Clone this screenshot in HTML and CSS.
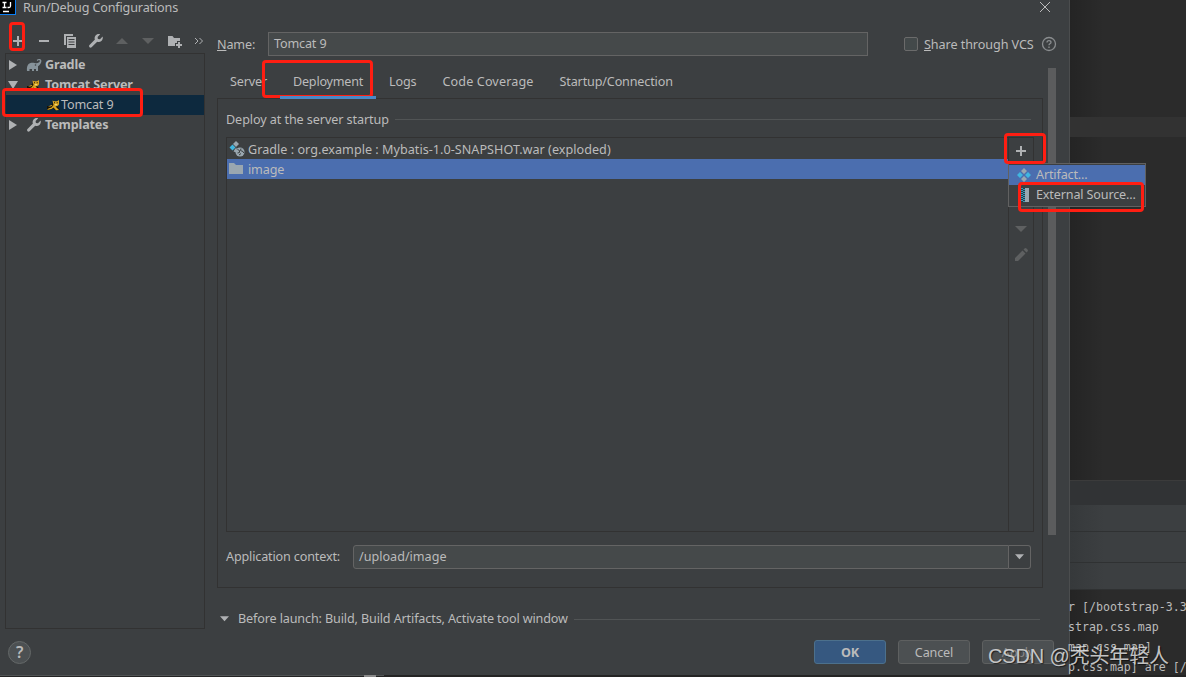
FILE: index.html
```html
<!DOCTYPE html>
<html lang="en">
<head>
    <meta charset="UTF-8">
    <meta name="viewport" content="width=device-width, initial-scale=1.0">
    <title>Run/Debug Configurations</title>
    <link rel="stylesheet" href="styles.css">
</head>
<body>
    <!-- shared icons -->
    <svg class="defs">
        <symbol id="wrench" viewBox="0 0 16 16">
            <path d="M14.6 3.6 12 6.2 9.9 5.9 9.6 3.9 12.2 1.3C10.400 .7 8.500 1.200 7.400 2.700 6.500 4 6.400 5.300 6.900 6.500L1.500 12.100C.9 12.700.9 13.600 1.500 14.200 2.100 14.800 3 14.800 3.600 14.200L9.200 8.700C10.600 9.300 12.200 9.100 13.400 8 14.700 6.800 15.100 5.100 14.600 3.600Z"/>
        </symbol>
        <symbol id="tomcat" viewBox="0 0 16 14">
            <path fill="#17130a" d="M1 8h3l3-3 5 4 2 3H9l-2-2-3 2H1Z"/>
            <path fill="#d9a520" d="M6.500 2.500 8 3.200h3L13 2v4.500L11.500 8 9.500 8.500l2 2 1.500 1.500-3 .3L7.500 9.500 5.500 11 1 12 2.500 10.500l3-1L7.500 7ZM2 8.500 5.500 7 6.500 7.500 4.500 8.500Z"/>
            <path fill="#f0d878" d="M8.500 6h3l-1 1.500h-1Z"/>
            <path fill="#17130a" d="M8 4.300h1v1H8ZM10.700 4.300h1v1h-1Z"/>
        </symbol>
        <symbol id="artifact" viewBox="0 0 16 16">
            <path fill="#9aa7b0" d="m8 1 3 3-3 3-3-3ZM8 9l3 3-3 3-3-3Z"/>
            <path fill="#40b6e0" d="m4 5 3 3-3 3-3-3ZM12 5l3 3-3 3-3-3Z"/>
        </symbol>
    </svg>

    <div class="desktop">
        <div class="dialog">
            <div class="title-bar">
                <svg class="app-icon" width="16" height="16" viewBox="0 0 16 16">
                    <rect width="16" height="15" fill="#0b7ff5"/>
                    <rect width="15" height="14" fill="#000"/>
                    <path d="M2.500 2.500h4M4.500 2.500v5M2.500 7.500h4M10.500 2v4q0 1.500-1.500 1.500H7.500M3 11.500h6" fill="none" stroke="#fff" stroke-width="1.300"/>
                </svg>
                <span class="title">Run/Debug Configurations</span>
                <svg class="close" width="12" height="12" viewBox="0 0 12 12"><path d="m1 1 10 10M11 1 1 11"/></svg>
            </div>

            <div class="content">
                <div class="sidebar">
                    <div class="toolbar">
                        <svg width="16" height="16" viewBox="0 0 16 16"><path d="M7 3h2v4h4v2H9v4H7V9H3V7h4Z"/></svg>
                        <svg width="16" height="16" viewBox="0 0 16 16"><path d="M3 7h10v2H3Z"/></svg>
                        <svg width="16" height="16" viewBox="0 0 16 16"><path fill-rule="evenodd" d="M2 1h9v2H4v9H2ZM5 4h9v11H5ZM6.500 6v1h6V6ZM6.500 8.500v1h6v-1ZM6.500 11v1h6v-1Z"/></svg>
                        <svg width="16" height="16"><use href="#wrench"/></svg>
                        <svg class="off" width="16" height="16" viewBox="0 0 16 16"><path d="M2 11h12L8 5Z"/></svg>
                        <svg class="off" width="16" height="16" viewBox="0 0 16 16"><path d="M2 5h12l-6 6Z"/></svg>
                        <svg width="16" height="16" viewBox="0 0 16 16"><path d="M2 3h4.500L8 5h6v3h-3v2H9v3H2ZM12 9h2v2h2v2h-2v2h-2v-2h-2v-2h2Z"/></svg>
                        <svg class="more" width="10" height="10" viewBox="0 0 10 10"><path d="m1 2 3 3-3 3M5.500 2l3 3-3 3"/></svg>
                    </div>
                    <div class="tree">
                        <div class="node">
                            <svg class="arrow" width="10" height="10" viewBox="0 0 10 10"><path d="M1 0v10l8-5Z"/></svg>
                            <svg class="icon" width="16" height="16" viewBox="0 0 16 16"><path fill="#87939a" d="M1 14c-.3-4 .3-7 3.500-8 2-.7 4.500.2 6 .2C12 6.200 13.800 5.300 13.800 4c0-.8-.8-1.200-1.500-.6l-.8.6-.8-1C12 1.600 15.300 1.500 15.400 4c0 2.600-2.200 4.500-3.400 5.300V14h-2v-2H8v2H6v-2H3.500v2Z"/><circle cx="9.500" cy="8" r=".8" fill="#3c3f41"/></svg>
                            <b>Gradle</b>
                        </div>
                        <div class="node">
                            <svg class="arrow" width="10" height="10" viewBox="0 0 10 10"><path d="M0 1h10L5 9Z"/></svg>
                            <svg class="icon" width="16" height="14"><use href="#tomcat"/></svg>
                            <b>Tomcat Server</b>
                        </div>
                        <div class="node child selected">
                            <svg class="icon" width="16" height="14"><use href="#tomcat"/></svg>
                            <span>Tomcat 9</span>
                        </div>
                        <div class="node">
                            <svg class="arrow" width="10" height="10" viewBox="0 0 10 10"><path d="M1 0v10l8-5Z"/></svg>
                            <svg class="icon" width="16" height="16"><use href="#wrench"/></svg>
                            <b>Templates</b>
                        </div>
                    </div>
                </div>

                <div class="editor">
                    <div class="name-row">
                        <label class="name-label"><u>N</u>ame:</label>
                        <div class="field name-field">Tomcat 9</div>
                        <span class="checkbox"></span>
                        <label class="share"><u>S</u>hare through VCS</label>
                        <svg class="hint" width="16" height="16" viewBox="0 0 16 16"><circle cx="8" cy="8" r="6.500"/><path d="M6 6.500Q6 4.600 8 4.600T10 6.300Q10 7.200 8.900 7.800 8 8.300 8 9.300M8 10.500v1.400"/></svg>
                    </div>

                    <div class="scroll-area">
                        <div class="main">
                            <div class="tabs">
                                <div class="tab">Server</div>
                                <div class="tab active">Deployment</div>
                                <div class="tab">Logs</div>
                                <div class="tab wide">Code Coverage</div>
                                <div class="tab">Startup/Connection</div>
                            </div>
                            <div class="panel">
                                <div class="group-title"><span>Deploy at the server startup</span><i class="rule"></i></div>
                                <div class="deploy">
                                    <div class="list">
                                        <div class="item">
                                            <svg width="16" height="16" viewBox="0 0 16 16"><path fill="#9aa7b0" d="m7 0 3 3-3 3-3-3Z"/><path fill="#40b6e0" d="m3.500 3.500 3 3-3 3-3-3Z"/><path fill="#9aa7b0" d="m6 8 1.500-1.500v5L4.500 10.500Z"/><circle cx="11" cy="11" r="4.500" fill="#9aa7b0"/><path d="m8.500 8.500 2 1v2l-2 .5M12 7.500l-.5 2 2.500 1 .8 1.500M10 14l2-1.500" fill="none" stroke="#3c3f41"/></svg>
                                            <span class="artifact-name">Gradle : org.example : Mybatis-1.0-SNAPSHOT.war (exploded)</span>
                                        </div>
                                        <div class="item selected">
                                            <svg width="16" height="16" viewBox="0 0 16 16"><path fill="#9aa7b0" d="M0 2h5l2 2h7v9H0Z"/></svg>
                                            <span>image</span>
                                        </div>
                                    </div>
                                    <div class="list-tools">
                                        <svg width="16" height="16" viewBox="0 0 16 16"><path d="M7 3h2v4h4v2H9v4H7V9H3V7h4Z"/></svg>
                                        <svg class="off down" width="16" height="16" viewBox="0 0 16 16"><path d="M2 5h12l-6 6Z"/></svg>
                                        <svg class="off" width="16" height="16" viewBox="0 0 16 16"><path d="m2 11 7.500-7.500 3 3L5 14H2ZM10.500 2.500l1-1q1-.8 2 0l1 1q.8 1 0 2l-1 1Z"/></svg>
                                    </div>
                                </div>
                                <div class="context-row">
                                    <label>Application context:</label>
                                    <div class="combo">
                                        <span class="field">/upload/image</span>
                                        <span class="combo-button"><svg width="10" height="6" viewBox="0 0 10 6"><path d="M0 0h10L5 5.500Z"/></svg></span>
                                    </div>
                                </div>
                            </div>
                        </div>
                        <div class="scrollbar"></div>
                    </div>

                    <div class="before">
                        <svg width="10" height="6" viewBox="0 0 10 6"><path d="M0 0h10L5 5.500Z"/></svg>
                        <span>Before launch: Build, Build Artifacts, Activate tool window</span>
                        <i class="rule"></i>
                    </div>
                </div>
            </div>

            <div class="footer">
                <div class="help">?</div>
                <div class="button primary">OK</div>
                <div class="button">Cancel</div>
                <div class="button disabled">Apply</div>
            </div>
        </div>

        <div class="ide">
            <div class="code-top"></div>
            <div class="caret-line"></div>
            <div class="code-rest"></div>
            <div class="crumbs"></div>
            <div class="strip run"></div>
            <div class="strip tall"></div>
            <div class="strip"></div>
            <div class="console">
                <div>r [/bootstrap-3.3</div>
                <div>strap.css.map</div>
                <div>map.css.map]</div>
                <div>p.css.map] are [/</div>
            </div>
        </div>
    </div>
    <div class="taskbar"><span></span></div>

    <div class="popup">
        <div class="popup-item hover"><svg width="16" height="16"><use href="#artifact"/></svg><span>Artifact...</span></div>
        <div class="popup-item"><svg width="16" height="16" viewBox="0 0 16 16"><path fill="#9aa7b0" d="M5 1h8v14H5Z"/><path fill="#263c46" d="M5 1h4v14H5Z"/><path d="M6 1v14M8 2v14" stroke="#40b6e0" stroke-dasharray="1 1" stroke-width="1.500"/></svg><span>External Source...</span></div>
    </div>

    <div class="mark mark-add"></div>
    <div class="mark mark-tomcat"></div>
    <div class="mark mark-tab"></div>
    <div class="mark mark-plus"></div>
    <div class="mark mark-external"></div>
    <div class="watermark">CSDN @秃头年轻人</div>
</body>
</html>
```
FILE: styles.css
```css
* {
    box-sizing: border-box;
}

body {
    margin: 0;
    width: 1186px;
    height: 677px;
    overflow: hidden;
    background: #2b2b2b;
    color: #bbbbbb;
    font-family: "Noto Sans", "Noto Sans CJK SC", sans-serif;
    font-size: 12.6px;
    letter-spacing: -0.15px;
    line-height: 20px;
    white-space: nowrap;
}

svg {
    display: block;
    flex: none;
    fill: #afb1b3;
}

.defs {
    position: absolute;
    width: 0;
    height: 0;
}

.desktop {
    display: flex;
    height: 675px;
}

/* dialog window */
.dialog {
    width: 1070px;
    flex: none;
    display: flex;
    flex-direction: column;
    background: #3c3f41;
    border-right: 1px solid #4b4d4e;
}

.title-bar {
    display: flex;
    height: 28px;
    padding-right: 18px;
}

.title {
    flex: 1;
    margin: -2px 0 0 7px;
}

.close {
    margin-top: 1px;
    fill: none;
    stroke: #bbbbbb;
}

.content {
    display: flex;
    height: 601px;
}

.sidebar {
    width: 205px;
    padding-left: 5px;
    display: flex;
    flex-direction: column;
}

.toolbar {
    display: flex;
    align-items: center;
    gap: 10px;
    height: 25px;
    padding-left: 5px;
}

.more {
    margin-left: 2px;
    fill: none;
    stroke: #afb1b3;
}

.off {
    fill: #5e6061;
}

.tree {
    flex: 1;
    border: 1px solid #323232;
    padding-top: 1px;
}

.node {
    display: flex;
    align-items: center;
    height: 20px;
    padding-left: 2px;
}

.arrow {
    margin: -1px 8px 0 0;
}

.node .icon {
    margin-right: 3px;
}

.node.child {
    padding-left: 40px;
}

.node.child .icon {
    margin-right: -1px;
}

.node.selected {
    background: #0d293e;
}

/* right side */
.editor {
    width: 864px;
    padding-left: 12px;
}

.name-row {
    display: flex;
    align-items: center;
    height: 24px;
    margin-top: 4px;
}

.name-row label {
    margin-top: 1px;
}

.name-label {
    width: 51px;
}

.field {
    background: #45494a;
    border: 1px solid #646464;
    padding-left: 5px;
    line-height: 22px;
}

.name-field {
    width: 600px;
    height: 24px;
}

.checkbox {
    width: 14px;
    height: 14px;
    margin: 0 6px 0 36px;
    border: 1px solid #6b6b6b;
    border-radius: 2px;
    background: #43494a;
}

.share {
    width: 117px;
    letter-spacing: -0.07px;
}

.hint {
    fill: none;
    stroke: #8a8d8f;
    stroke-width: 1.3;
}

.scroll-area {
    display: flex;
    height: 532px;
}

.main {
    width: 826px;
}

.tabs {
    display: flex;
    height: 43px;
    padding-top: 12px;
}

.tab {
    padding: 4px 13px 0;
}

.tab.active {
    border-bottom: 3px solid #4a88c7;
    letter-spacing: -0.23px;
    position: relative;
    z-index: 1;
}

.tab.wide {
    letter-spacing: 0.13px;
}

.panel {
    margin-top: -1px;
    height: 490px;
    border: 1px solid #323232;
    padding: 10px 8px 0 8px;
}

.group-title {
    display: flex;
    align-items: center;
    width: 805px;
    height: 20px;
}

.group-title span {
    margin-top: 2px;
    letter-spacing: -0.08px;
}

.rule {
    flex: 1;
    height: 1px;
    margin-left: 6px;
    background: #515455;
}

.deploy {
    display: flex;
    width: 808px;
    height: 395px;
    margin-top: 8px;
    border: 1px solid #323232;
}

.list {
    flex: 1;
    padding-top: 1px;
}

.item {
    display: flex;
    align-items: center;
    height: 20px;
    gap: 3px;
    padding-left: 2px;
}

.item span {
    margin-top: 2px;
}

.item.selected {
    background: #4b6eaf;
}

.artifact-name {
    letter-spacing: 0.03px;
}

.list-tools {
    width: 25px;
    border-left: 1px solid #323232;
    padding: 5px 4px;
}

.list-tools .down {
    margin: 62px 0 10px;
}

.context-row {
    display: flex;
    align-items: center;
    margin-top: 13px;
}

.context-row label {
    width: 127px;
}

.combo {
    display: flex;
    width: 678px;
    height: 24px;
}

.combo .field {
    flex: 1;
    border-radius: 3px 0 0 3px;
    letter-spacing: 0;
}

.combo-button {
    display: flex;
    align-items: center;
    justify-content: center;
    width: 22px;
    border: 1px solid #646464;
    border-left: 0;
    border-radius: 0 3px 3px 0;
}

.combo-button svg, .before svg {
    width: 9px;
}

.scrollbar {
    width: 8px;
    height: 467px;
    margin: 12px 0 0 5px;
    background: #5b5c5d;
}

.before {
    display: flex;
    align-items: center;
    width: 823px;
    margin-top: 21px;
    padding-left: 3px;
}

.before span {
    margin-left: 9px;
    letter-spacing: -0.13px;
}

.footer {
    display: flex;
    align-items: center;
    gap: 12px;
    height: 46px;
    padding: 0 15px 0 8px;
}

.help {
    width: 23px;
    height: 23px;
    margin-right: auto;
    border: 1px solid #646868;
    border-radius: 50%;
    background: #4c5052;
    font-size: 16px;
    font-weight: 600;
    line-height: 21px;
    text-align: center;
}

.button {
    width: 72px;
    height: 24px;
    border: 1px solid #5e6060;
    border-radius: 3px;
    background: #4c5052;
    line-height: 23px;
    text-align: center;
}

.button.primary {
    background: #365880;
    border-color: #4c708c;
    font-weight: bold;
}

.button.disabled {
    color: #8a8a8a;
}

/* IDE window behind the dialog */
.ide {
    width: 116px;
    display: flex;
    flex-direction: column;
    background: linear-gradient(to right, rgba(0, 0, 0, 0.16), transparent 34px) #2b2b2b;
}

.ide > div {
    flex: none;
}

.code-top {
    height: 117px;
}

.caret-line {
    height: 20px;
    background: #323232;
}

.code-rest {
    height: 343px;
}

.crumbs {
    height: 25px;
    border-top: 1px solid #3b3b3b;
    background: #313335;
}

.strip {
    height: 27px;
    border-bottom: 1px solid #2f3132;
    background: linear-gradient(to right, #36393b, #3c3f41 34px);
}

.strip.tall {
    height: 31px;
}

.console {
    padding-top: 7px;
    margin-left: -2px;
    font-family: "DejaVu Sans Mono", "Liberation Mono", monospace;
    font-size: 11.6px;
    letter-spacing: 0;
}

.taskbar {
    height: 2px;
    padding-left: 364px;
    background: linear-gradient(to right, #505354 384px, #242424 384px) 0 0 / 100% 1px no-repeat #242424;
}

.taskbar span {
    display: block;
    width: 12px;
    height: 2px;
    background: #8a8a8a;
}

/* add-artifact menu */
.popup {
    position: absolute;
    left: 1008px;
    top: 163px;
    width: 138px;
    height: 44px;
    padding-top: 1px;
    border: 1px solid #616161;
    background: #3c3f41;
}

.popup-item {
    display: flex;
    align-items: center;
    gap: 4px;
    height: 20px;
    padding-left: 7px;
}

.popup-item.hover {
    background: #4b6eaf;
}

/* red highlight frames */
.mark {
    position: absolute;
    border: 3px solid #ff1e12;
    border-radius: 4px;
}

.mark-add {
    left: 9px;
    top: 22px;
    width: 16px;
    height: 29px;
}

.mark-tomcat {
    left: 2px;
    top: 88px;
    width: 141px;
    height: 29px;
}

.mark-tab {
    left: 262px;
    top: 60px;
    width: 111px;
    height: 38px;
}

.mark-plus {
    left: 1004px;
    top: 133px;
    width: 42px;
    height: 31px;
}

.mark-external {
    left: 1018px;
    top: 182px;
    width: 126px;
    height: 30px;
}

.watermark {
    position: absolute;
    left: 988px;
    top: 641px;
    color: rgba(225, 225, 225, 0.85);
    font-family: "Liberation Sans", "Noto Sans CJK SC", sans-serif;
    font-size: 20px;
    line-height: 30px;
    text-shadow: 1px 1px 1px rgba(0, 0, 0, 0.6);
}
```
